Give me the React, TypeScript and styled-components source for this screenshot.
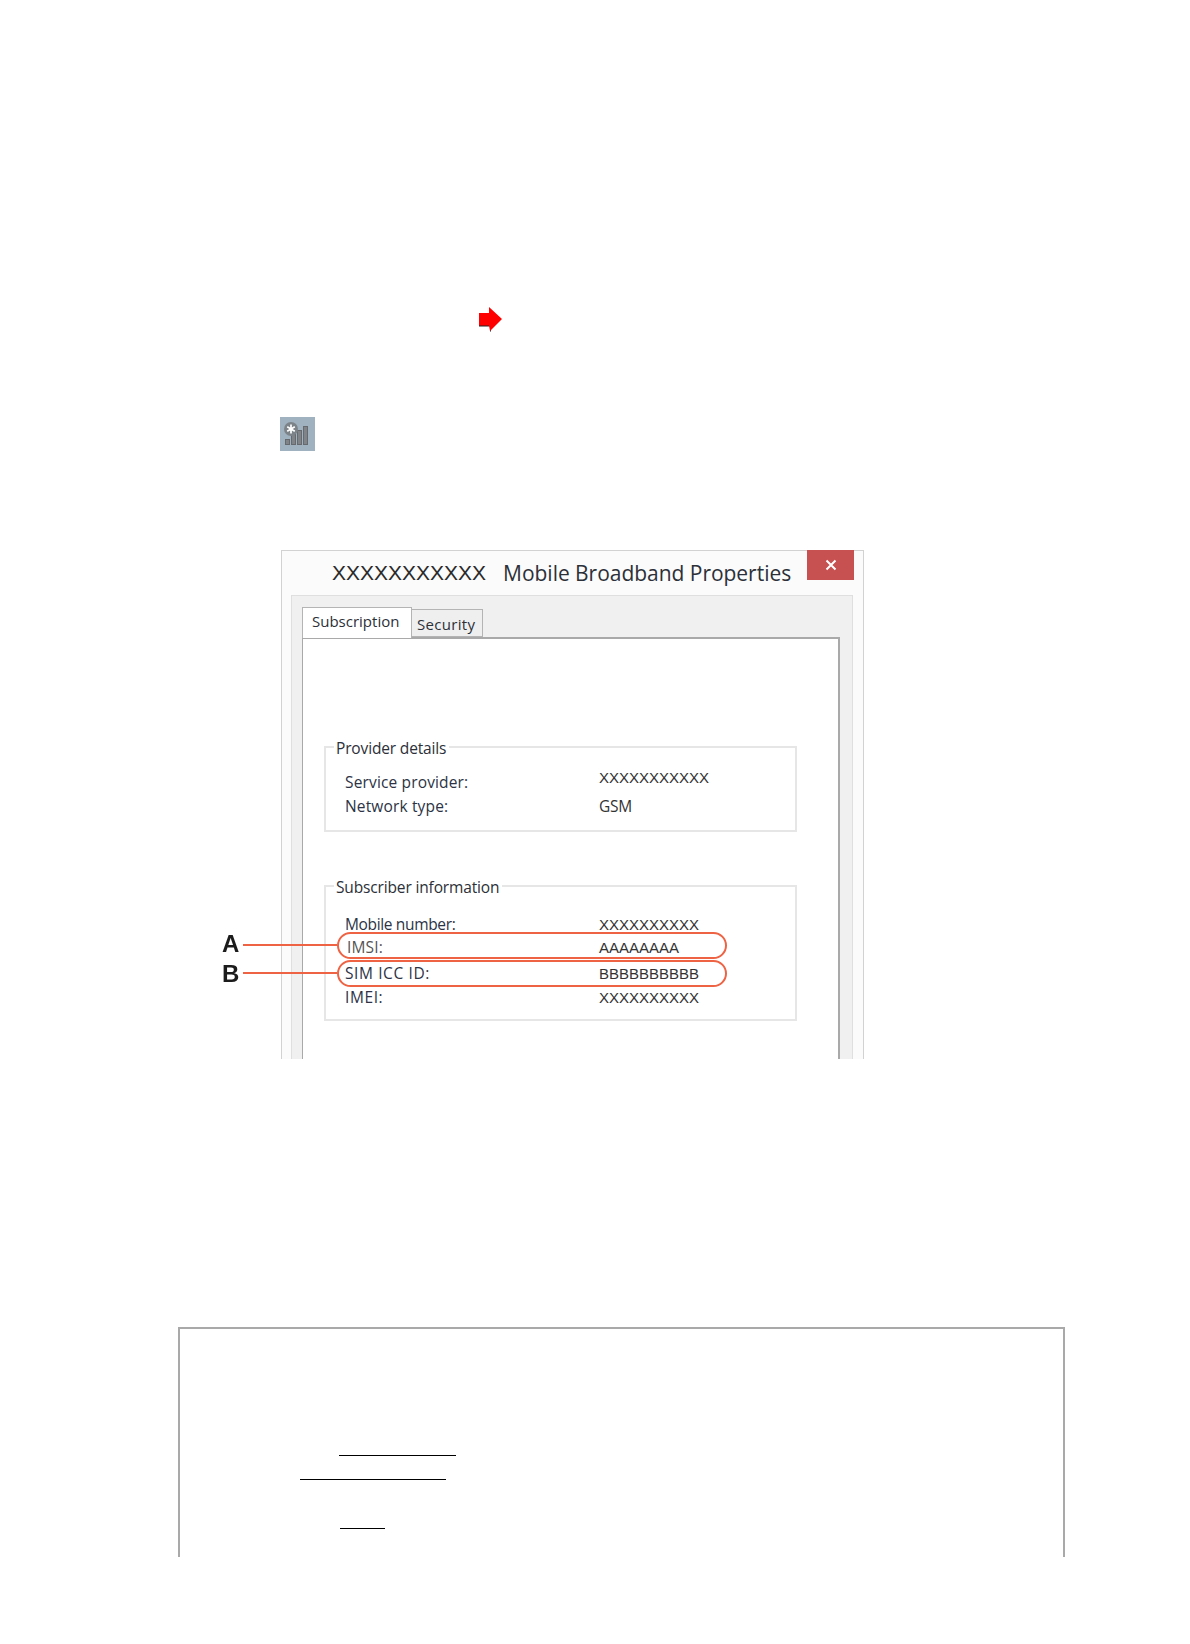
import * as React from "react";
import styled, { createGlobalStyle } from "styled-components";

const GlobalStyle = createGlobalStyle`
  html, body {
    margin: 0;
    padding: 0;
    background: #fff;
  }
  body {
    font-family: "Open Sans", "Liberation Sans", sans-serif;
    color: #2c3038;
  }
`;

const Page = styled.div`
  width: 1190px;
  height: 1644px;
  overflow: hidden;
  background: #fff;
`;

const ArrowLine = styled.div`
  display: flex;
  padding: 307px 0 0 479px;
`;

const IconLine = styled.div`
  display: flex;
  padding: 85px 0 0 280px;
`;

const Figure = styled.div`
  position: relative;
  width: 583px;
  margin: 99px 0 0 281px;
  filter: blur(0.35px);
`;

const Dialog = styled.div`
  box-sizing: border-box;
  height: 509px;
  overflow: hidden;
  background: #fbfbfb;
  border: 1px solid #d2d2d2;
  border-bottom: 0;
  padding: 0 10px 0 9px;
`;

const TitleBar = styled.div`
  display: flex;
  height: 44px;
  align-items: center;
  padding-left: 41px;
  gap: 17px;
  font-size: 21px;
  white-space: nowrap;
`;

const TitleId = styled.span`
  font-family: "Liberation Sans", sans-serif;
  font-size: 21px;
  letter-spacing: 0;
  color: #2a2a2a;
`;

const TitleText = styled.span`
  letter-spacing: -0.03px;
`;

const CloseButton = styled.div`
  position: absolute;
  top: 0;
  right: 10px;
  width: 47px;
  height: 30px;
  display: flex;
  align-items: center;
  justify-content: center;
  background: #c75050;
`;

const Panel = styled.div`
  box-sizing: border-box;
  height: 465px;
  background: #f0f0f0;
  border: 1px solid #dfdfdf;
  border-bottom: 0;
  padding: 10px 12px 0 10px;
`;

const Tabs = styled.div`
  display: flex;
  align-items: flex-end;
  height: 31px;
`;

const Tab = styled.div<{ $active?: boolean }>`
  box-sizing: border-box;
  height: ${(p) => (p.$active ? 31 : 28)}px;
  width: ${(p) => (p.$active ? 110 : 71)}px;
  margin-bottom: ${(p) => (p.$active ? -1 : 0)}px;
  position: relative;
  z-index: ${(p) => (p.$active ? 1 : 0)};
  padding: ${(p) => (p.$active ? "3px 0 0 9px" : "4px 0 0 5px")};
  background: ${(p) => (p.$active ? "#fff" : "#efefef")};
  border: 1px solid #b4b4b4;
  border-bottom: ${(p) => (p.$active ? 0 : "1px solid #b4b4b4")};
  border-left: ${(p) => (p.$active ? "1px solid #b4b4b4" : 0)};
  font-size: 15px;
  line-height: 20px;
  letter-spacing: ${(p) => (p.$active ? 0 : 0.3)}px;
`;

const TabPage = styled.div`
  box-sizing: border-box;
  height: 431px;
  background: #fff;
  border: 2px solid #a9a9a9;
  border-width: 2px 2px 0 1px;
  padding: 107px 41px 0 21px;
`;

const Group = styled.div<{ $height: number; $gap?: number }>`
  box-sizing: border-box;
  position: relative;
  height: ${(p) => p.$height}px;
  margin-top: ${(p) => p.$gap ?? 0}px;
  border: 2px solid #e6e6e6;
`;

const Legend = styled.div`
  position: absolute;
  top: -11px;
  left: 8px;
  padding: 0 3px 0 2px;
  background: #fff;
  font-size: 15.5px;
  line-height: 22px;
  letter-spacing: -0.15px;
  white-space: nowrap;
`;

const Rows = styled.div<{ $top: number }>`
  padding: ${(p) => p.$top}px 0 0 19px;
`;

const Row = styled.div<{ $height: number }>`
  display: grid;
  grid-template-columns: 254px 1fr;
  height: ${(p) => p.$height}px;
  font-size: 15.5px;
  line-height: 22px;
`;

const Label = styled.div<{ $indent?: number; $drop?: number; $spacing?: number; $muted?: boolean }>`
  padding: ${(p) => p.$drop ?? 0}px 0 0 ${(p) => p.$indent ?? 0}px;
  letter-spacing: ${(p) => p.$spacing ?? 0.15}px;
  color: ${(p) => (p.$muted ? "#555" : "#2c3345")};
  white-space: nowrap;
`;

const Value = styled.div<{ $indent?: number }>`
  padding-left: ${(p) => p.$indent ?? 0}px;
  letter-spacing: -0.3px;
  color: #333;
  white-space: nowrap;
`;

const Masked = styled.span`
  font-family: "Liberation Sans", sans-serif;
  font-size: 15px;
  letter-spacing: 0;
`;

const Oval = styled.div<{ $top: number; $height: number }>`
  box-sizing: border-box;
  position: absolute;
  left: 56px;
  top: ${(p) => p.$top}px;
  width: 390px;
  height: ${(p) => p.$height}px;
  border: 2.5px solid #ee6344;
  border-radius: 14px;
`;

const Leader = styled.div<{ $top: number }>`
  position: absolute;
  left: -38px;
  top: ${(p) => p.$top}px;
  width: 94px;
  height: 2px;
  background: #ee6344;
`;

const Letter = styled.div<{ $top: number }>`
  position: absolute;
  left: -59px;
  top: ${(p) => p.$top}px;
  width: 18px;
  font-family: "Liberation Sans", sans-serif;
  font-weight: 700;
  font-size: 24px;
  line-height: 24px;
  color: #1c1c1c;
`;

const NoteBox = styled.div`
  box-sizing: border-box;
  width: 887px;
  height: 230px;
  margin: 268px 0 0 178px;
  padding-top: 126px;
  border: 2px solid #a9a9a9;
  border-bottom: 0;
`;

const BlankLink = styled.div<{ $indent: number; $width: number; $gap: number }>`
  width: ${(p) => p.$width}px;
  height: 1px;
  margin: ${(p) => p.$gap}px 0 0 ${(p) => p.$indent}px;
  background: #000;
`;

const RedArrow = () => (
  <svg width="23" height="25" viewBox="0 0 23 25">
    <path d="M0 18v1.5h11V25l1-1-1.500-6z" fill="#222" />
    <polygon points="0,6 10,6 10,0 23,12 11,24 10,18.500 0,18.500" fill="#ff0000" />
  </svg>
);

const SignalIcon = () => (
  <svg width="35" height="34" viewBox="0 0 35 34">
    <rect width="35" height="34" fill="#a0b1c0" />
    <g fill="#808387" stroke="#666a6e" strokeWidth="1">
      <rect x="5.5" y="22.5" width="4" height="5" />
      <rect x="11.500" y="17.500" width="4" height="10" />
      <rect x="17.500" y="13.500" width="4" height="14" />
      <rect x="23.500" y="9.500" width="4" height="18" />
    </g>
    <circle cx="11" cy="12" r="7" fill="#7d8489" />
    <path
      d="M11 7.500v9M7.200 9.800l7.600 4.400M14.800 9.800l-7.600 4.400"
      stroke="#fff"
      strokeWidth="1.700"
    />
  </svg>
);

const CloseGlyph = () => (
  <svg width="12" height="12" viewBox="0 0 12 12">
    <path d="M1.500 1.500l9 9M10.500 1.500l-9 9" stroke="#fff" strokeWidth="2" />
  </svg>
);

const App = () => {
  return (
    <Page>
      <GlobalStyle />
      <ArrowLine>
        <RedArrow />
      </ArrowLine>
      <IconLine>
        <SignalIcon />
      </IconLine>

      <Figure>
        <Dialog>
          <TitleBar>
            <TitleId>XXXXXXXXXXX</TitleId>
            <TitleText>Mobile Broadband Properties</TitleText>
          </TitleBar>
          <Panel>
            <Tabs>
              <Tab $active>Subscription</Tab>
              <Tab>Security</Tab>
            </Tabs>
            <TabPage>
              <Group $height={86}>
                <Legend>Provider details</Legend>
                <Rows $top={18}>
                  <Row $height={29}>
                    <Label $drop={5}>Service provider:</Label>
                    <Value>
                      <Masked>XXXXXXXXXXX</Masked>
                    </Value>
                  </Row>
                  <Row $height={24}>
                    <Label>Network type:</Label>
                    <Value>GSM</Value>
                  </Row>
                </Rows>
              </Group>
              <Group $height={136} $gap={53}>
                <Legend>Subscriber information</Legend>
                <Rows $top={26}>
                  <Row $height={23}>
                    <Label $spacing={-0.35}>Mobile number:</Label>
                    <Value>
                      <Masked>XXXXXXXXXX</Masked>
                    </Value>
                  </Row>
                  <Row $height={26}>
                    <Label $indent={2} $muted>
                      IMSI:
                    </Label>
                    <Value>
                      <Masked>AAAAAAAA</Masked>
                    </Value>
                  </Row>
                  <Row $height={24}>
                    <Label $spacing={0.6}>SIM ICC ID:</Label>
                    <Value>
                      <Masked>BBBBBBBBBB</Masked>
                    </Value>
                  </Row>
                  <Row $height={24}>
                    <Label $spacing={0.6}>IMEI:</Label>
                    <Value>
                      <Masked>XXXXXXXXXX</Masked>
                    </Value>
                  </Row>
                </Rows>
              </Group>
            </TabPage>
          </Panel>
        </Dialog>

        <CloseButton>
          <CloseGlyph />
        </CloseButton>

        <Oval $top={382} $height={27} />
        <Oval $top={410} $height={27} />
        <Leader $top={394} />
        <Leader $top={422} />
        <Letter $top={382}>A</Letter>
        <Letter $top={412}>B</Letter>
      </Figure>

      <NoteBox>
        <BlankLink $indent={159} $width={117} $gap={0} />
        <BlankLink $indent={120} $width={146} $gap={23} />
        <BlankLink $indent={160} $width={45} $gap={48} />
      </NoteBox>
    </Page>
  );
};

export default App;
